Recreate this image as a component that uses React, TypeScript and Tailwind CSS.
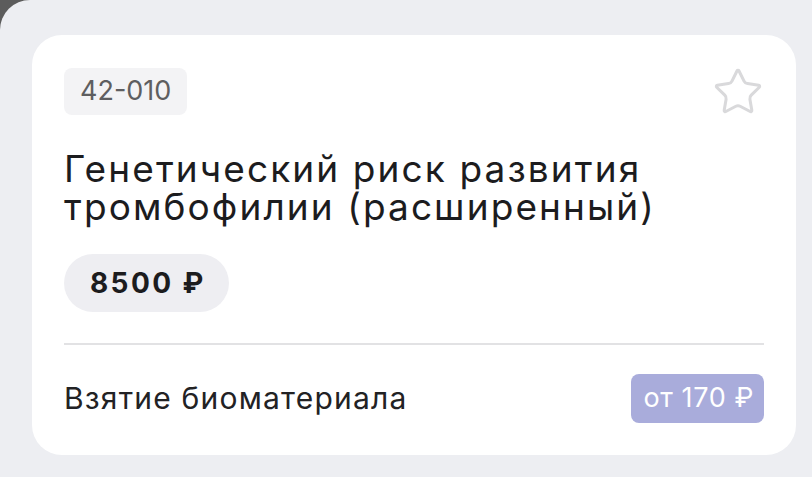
import React from 'react';
import { Star } from 'lucide-react';

export default function App() {
    return (
        <div className="h-[477px] w-[812px] bg-[#5c5c5c] overflow-hidden">
            <div className="h-full w-full bg-[#edeef2] rounded-tl-[30px] pt-[35px] pl-[32px] font-['Inter','Noto_Sans',sans-serif]">
                <div className="w-[764px] h-[420px] bg-white rounded-[30px] px-[32px] pt-[33px] flex flex-col">
                    {/* code + favourite */}
                    <div className="h-[47px] flex items-start justify-between">
                        <div className="h-[47px] px-[16px] rounded-[8px] bg-[#f3f3f5] flex items-center text-[27px] text-[#5e5e60]">
                            42-010
                        </div>
                        <Star size={52} strokeWidth={1.4} className="text-[#d9d9db] -mt-[2px] -mb-[3px]" />
                    </div>

                    {/* title */}
                    <h1 className="mt-[35px] text-[37px] leading-[38px] text-[#1c1c1e] tracking-[2.1px]">
                        Генетический риск развития
                        <br />
                        тромбофилии (расширенный)
                    </h1>

                    {/* price */}
                    <div className="mt-[28px] flex">
                        <div className="h-[58px] pl-[26px] pr-[23px] rounded-full bg-[#eeeef2] flex items-center text-[28px] font-bold text-[#1c1c1e] tracking-[2.4px]">
                            8500 ₽
                        </div>
                    </div>

                    <div className="mt-[31px] h-[2px] bg-[#e2e2e4]" />

                    {/* biomaterial */}
                    <div className="mt-[29px] flex items-center justify-between">
                        <span className="text-[30px] text-[#222224] tracking-[1.2px]">Взятие биоматериала</span>
                        <div className="h-[49px] pl-[12px] pr-[10px] rounded-[8px] bg-[#a9acdb] flex items-center text-[27px] text-white tracking-[0.6px]">
                            от 170 ₽
                        </div>
                    </div>
                </div>
            </div>
        </div>
    );
}
